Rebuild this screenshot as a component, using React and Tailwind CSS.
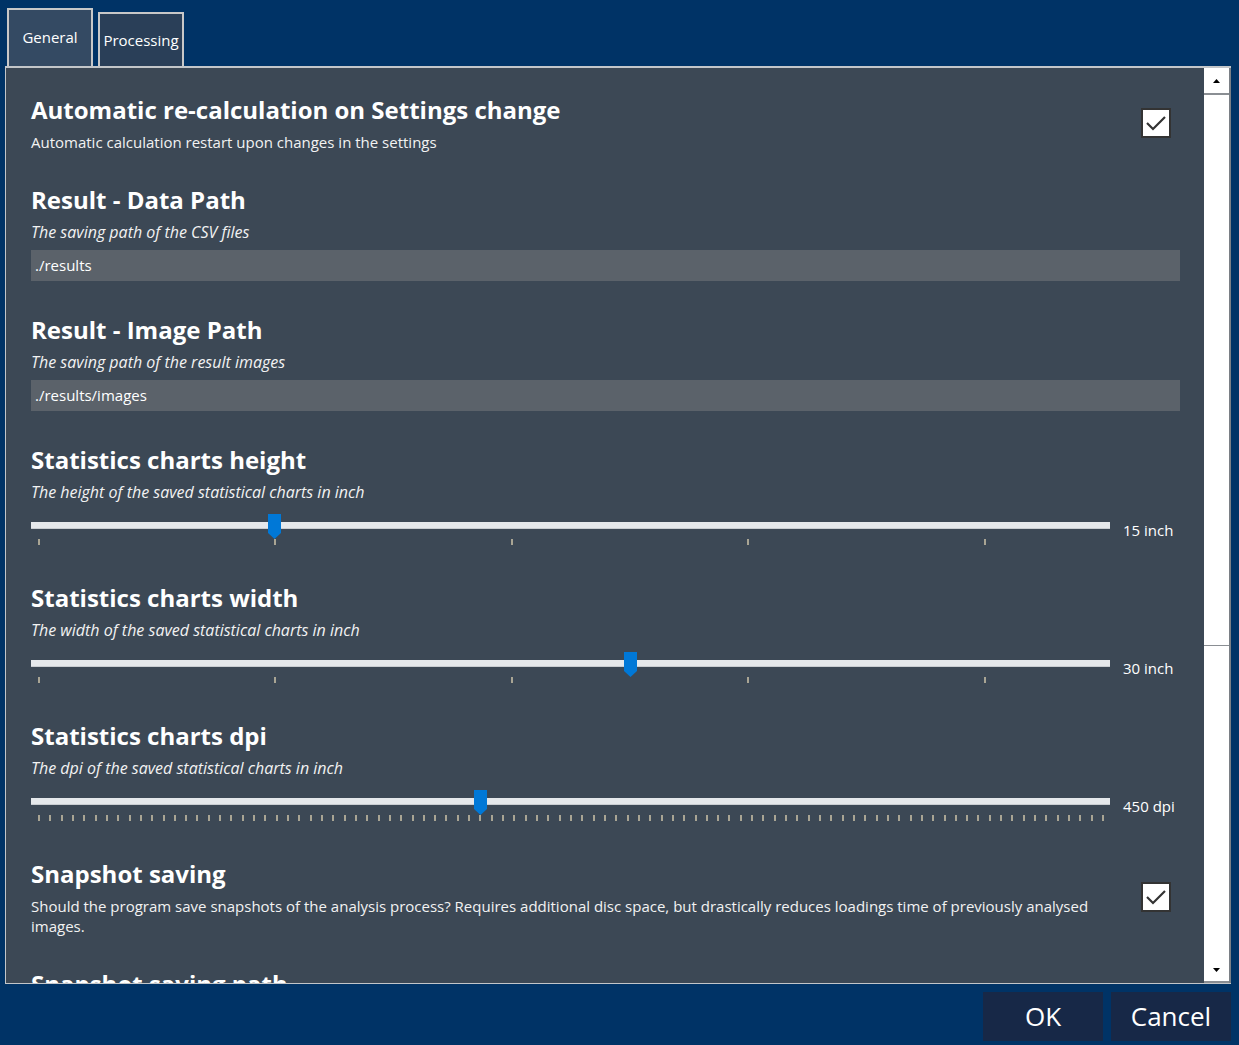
import React from "react";

const font = { fontFamily: '"Open Sans", "Noto Sans", sans-serif' };

const Check = () => (
  <div className="w-[30px] h-[30px] bg-white border-2 border-[#333] shrink-0 mr-[9px]">
    <svg viewBox="0 0 26 26" className="w-full h-full">
      <path d="M4 13 L10 19 L22 7" fill="none" stroke="#333" strokeWidth="2.2" />
    </svg>
  </div>
);

const Title = ({ children }) => (
  <div className="text-[24px] font-bold leading-8 text-white whitespace-nowrap">{children}</div>
);

const Desc = ({ children, italic }) => (
  <div className={"mt-1.5 leading-5 text-[#f2f2f2] " + (italic ? "italic text-[16px]" : "text-[15px]")}>
    {children}
  </div>
);

const PathInput = ({ value }) => (
  <div className="mt-2 h-[31px] bg-[#5b626a] flex items-center pl-1 text-[15px] text-white">
    {value}
  </div>
);

const Slider = ({ pos, ticks, value }) => {
  const inner = 1064;
  const list = [];
  for (let i = 0; i < ticks; i++) list.push((inner * i) / (ticks === 5 ? 4.5 : 94));
  return (
    <div className="flex mt-[10px] h-[34px]">
      <div className="relative w-[1079px] h-full">
        <div className="absolute left-0 right-0 top-[10px] h-[7px] bg-[#e5e8eb] border-b border-[#c9cdd1]" />
        {list.map((x, i) => (
          <div
            key={i}
            className="absolute top-[27px] w-[2px] h-[6px] bg-[#a9a594]"
            style={{ left: 7 + x }}
          />
        ))}
        <svg
          className="absolute top-[2px]"
          style={{ left: pos - 6.5 }}
          width="13"
          height="25"
          viewBox="0 0 13 25"
        >
          <path d="M0 0 H13 V19 L6.5 25 L0 19 Z" fill="#0078d7" />
        </svg>
      </div>
      <div className="pl-[13px] pt-[8px] text-[15px] leading-5 text-white whitespace-nowrap">{value}</div>
    </div>
  );
};

export default function App() {
  return (
    <div style={font} className="w-[1239px] h-[1045px] bg-[#003366] flex flex-col overflow-hidden">
      <div className="flex items-end h-[66px] pl-[7px] gap-[5px]">
        <div className="w-[86px] h-[58px] bg-[#344a63] border-2 border-b-0 border-[#c8c8c8] flex items-center justify-center text-[15px] text-white pb-[2px]">
          General
        </div>
        <div className="w-[86px] h-[54px] bg-[#2a3f58] border-2 border-b-0 border-[#c8c8c8] flex items-center justify-center text-[15px] text-white">
          Processing
        </div>
      </div>
      <div className="ml-[5px] w-[1226px] h-[918px] border-t-2 border-l border-b border-[#c3c6c9] bg-[#3c4855] flex">
        <div className="flex-1 overflow-hidden pl-[25px] pr-[24px] pt-[26px]">
          <div className="flex items-center">
            <div className="flex-1">
              <Title>Automatic re-calculation on Settings change</Title>
              <Desc>Automatic calculation restart upon changes in the settings</Desc>
            </div>
            <Check />
          </div>

          <div className="mt-8">
            <Title>Result - Data Path</Title>
            <Desc italic>The saving path of the CSV files</Desc>
            <PathInput value="./results" />
          </div>

          <div className="mt-[33px]">
            <Title>Result - Image Path</Title>
            <Desc italic>The saving path of the result images</Desc>
            <PathInput value="./results/images" />
          </div>

          <div className="mt-[33px]">
            <Title>Statistics charts height</Title>
            <Desc italic>The height of the saved statistical charts in inch</Desc>
            <Slider pos={243.5} ticks={5} value="15 inch" />
          </div>

          <div className="mt-[36px]">
            <Title>Statistics charts width</Title>
            <Desc italic>The width of the saved statistical charts in inch</Desc>
            <Slider pos={599} ticks={5} value="30 inch" />
          </div>

          <div className="mt-[36px]">
            <Title>Statistics charts dpi</Title>
            <Desc italic>The dpi of the saved statistical charts in inch</Desc>
            <Slider pos={449} ticks={95} value="450 dpi" />
          </div>

          <div className="mt-[36px] flex items-center">
            <div className="flex-1 pr-[38px]">
              <Title>Snapshot saving</Title>
              <Desc>
                Should the program save snapshots of the analysis process? Requires additional disc space, but
                drastically reduces loadings time of previously analysed images.
              </Desc>
            </div>
            <Check />
          </div>

          <div className="mt-8">
            <Title>Snapshot saving path</Title>
          </div>
        </div>

        <div className="w-[27px] bg-white flex flex-col border-r-2 border-[#7a7f85]">
          <div className="h-[27px] border-b-2 border-[#8a8e93] flex items-center justify-center">
            <svg width="7" height="4" viewBox="0 0 7 4">
              <path d="M0 4 L3.5 0 L7 4 Z" fill="#000" />
            </svg>
          </div>
          <div className="h-[551px] border-b border-[#8a8e93]" />
          <div className="flex-1" />
          <div className="h-[24px] border-b-2 border-[#8a8e93] flex items-center justify-center">
            <svg width="7" height="4" viewBox="0 0 7 4">
              <path d="M0 0 L7 0 L3.5 4 Z" fill="#000" />
            </svg>
          </div>
        </div>
      </div>
      <div className="flex justify-end gap-2 pt-2 pr-2">
        <button className="w-[120px] h-[49px] bg-[#172847] text-[26px] text-white">OK</button>
        <button className="w-[120px] h-[49px] bg-[#172847] text-[26px] text-white">Cancel</button>
      </div>
    </div>
  );
}
